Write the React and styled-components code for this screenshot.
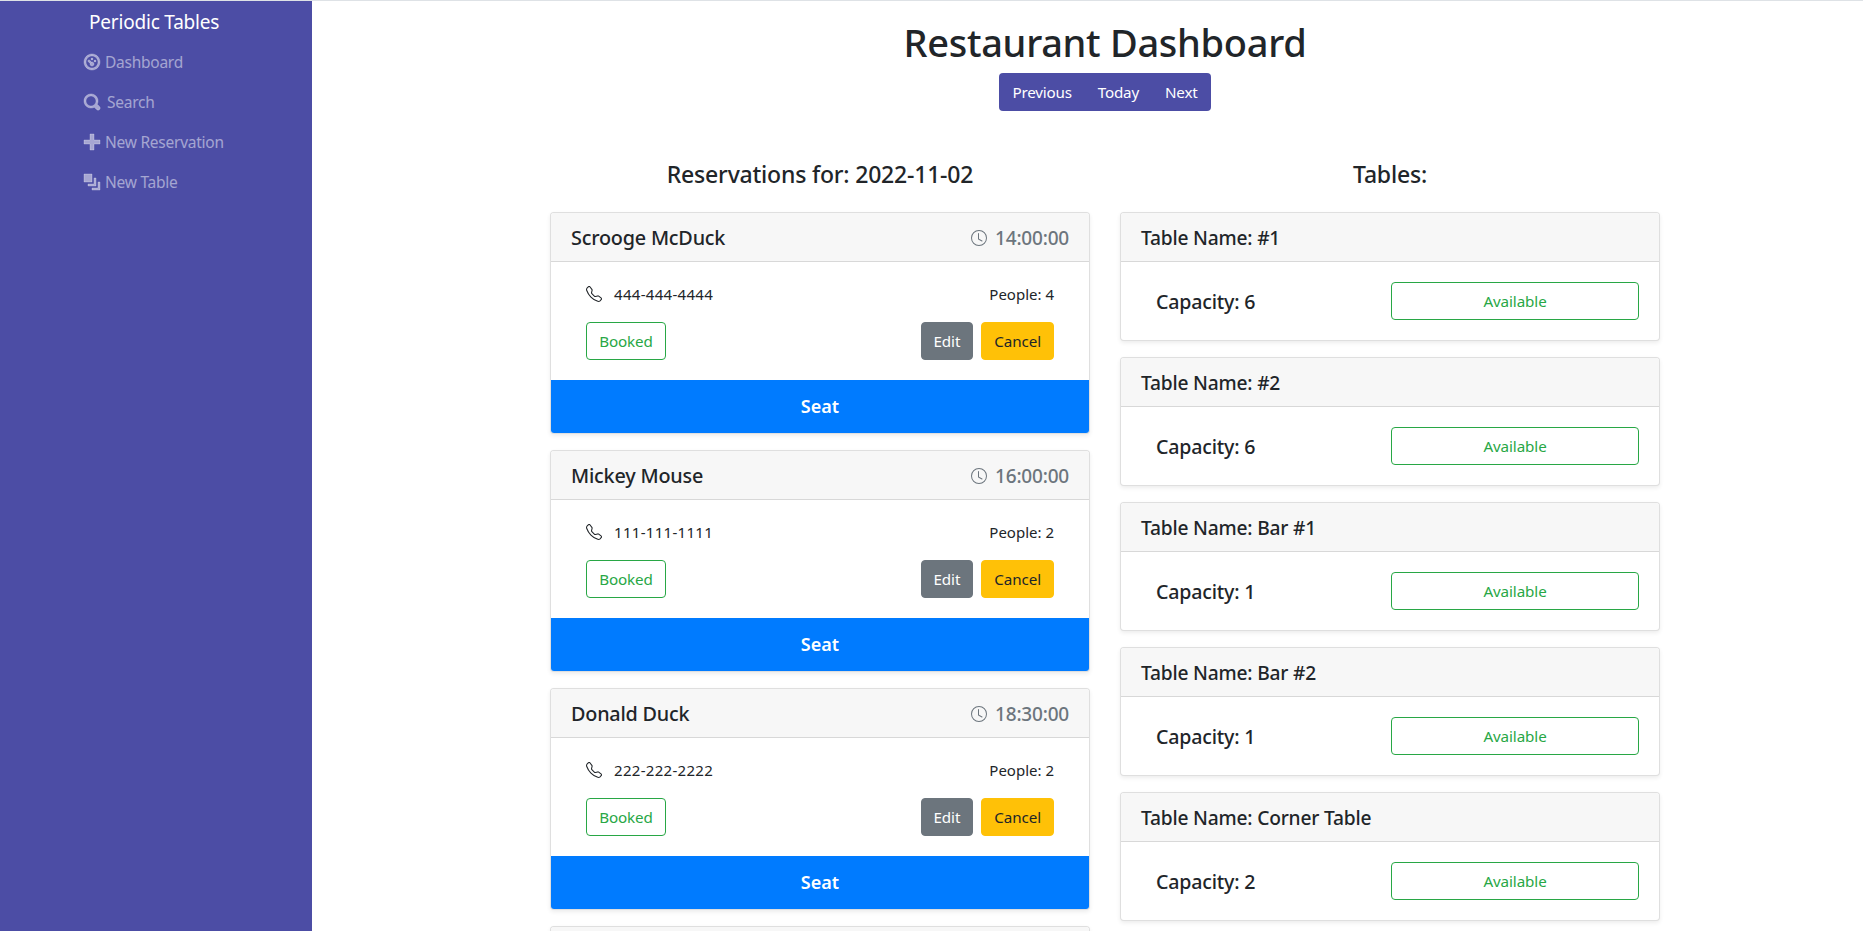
import React from "react";
import styled, { createGlobalStyle } from "styled-components";

//icons
import { BsClock, BsTelephone } from "react-icons/bs";

const GlobalStyle = createGlobalStyle`
  html, body {
    margin: 0;
    padding: 0;
    height: 100%;
    overflow: hidden;
    background: #fff;
  }
  body {
    font-family: "Noto Sans", "Open Sans", Arial, sans-serif;
    font-size: 16px;
    color: #212529;
  }
  * {
    box-sizing: border-box;
  }
`;

const Page = styled.div`
  display: flex;
  height: 100vh;
  border-top: 1px solid #dee2e6;
  overflow: hidden;
`;

const Sidebar = styled.nav`
  flex: 0 0 312px;
  background: #4c4da5;
  display: flex;
  flex-direction: column;
  padding: 9px 0 0 84px;
`;

const Brand = styled.div`
  color: #fff;
  font-size: 19px;
  line-height: 24px;
  margin: 0 0 8px 5px;
  letter-spacing: -0.2px;
`;

const NavItem = styled.a`
  display: flex;
  align-items: center;
  height: 40px;
  color: rgba(255, 255, 255, 0.5);
  font-size: 15.5px;
  letter-spacing: -0.25px;
  gap: ${(p) => p.$gap || 5}px;
`;

const NavIcon = styled.svg`
  width: 16px;
  height: 16px;
  fill: currentColor;
  stroke: currentColor;
  stroke-width: 0.25;
  overflow: visible;
  flex: none;
`;

const Main = styled.main`
  flex: 1;
  padding-left: 238px;
  overflow: hidden;
`;

const Content = styled.div`
  width: 1110px;
`;

const Title = styled.h1`
  margin: 17px 0 0;
  font-size: 38px;
  line-height: 48px;
  font-weight: 500;
  text-align: center;
  letter-spacing: -0.3px;
`;

const DateGroup = styled.div`
  display: flex;
  justify-content: center;
  margin-top: 7px;
`;

const DateButtons = styled.div`
  display: flex;
  background: #4c4da5;
  border-radius: 4px;
`;

const DateButton = styled.button`
  height: 38px;
  padding: 0 13px;
  border: none;
  background: transparent;
  color: #fff;
  font: inherit;
  font-size: 15.2px;
  letter-spacing: -0.2px;
`;

const Columns = styled.div`
  display: grid;
  grid-template-columns: 540px 540px;
  column-gap: 30px;
  margin-top: 44px;
`;

const ColumnTitle = styled.h4`
  margin: 0 0 19px;
  height: 38px;
  line-height: 38px;
  font-size: 23px;
  font-weight: 500;
  text-align: center;
  letter-spacing: -0.2px;
`;

const Card = styled.div`
  background: #fff;
  border: 1px solid rgba(0, 0, 0, 0.125);
  border-radius: 4px;
  box-shadow: 0 2px 4px rgba(0, 0, 0, 0.075);
  margin-bottom: 16px;
  overflow: hidden;
`;

const CardHeader = styled.div`
  display: flex;
  justify-content: space-between;
  align-items: center;
  height: 49px;
  padding: 1px 20px 0;
  background: #f7f7f7;
  border-bottom: 1px solid rgba(0, 0, 0, 0.125);
  font-size: ${(p) => p.$size || 19}px;
  font-weight: 500;
  letter-spacing: -0.2px;
`;

const TimeText = styled.span`
  display: flex;
  align-items: center;
  gap: 8px;
  color: #6c757d;
  font-size: 19px;

  svg {
    width: 16px;
    height: 16px;
  }
`;

const ReservationBody = styled.div`
  padding: 21px 35px 0;
  height: 118px;
`;

const Row = styled.div`
  display: flex;
  justify-content: space-between;
  align-items: center;
`;

const InfoRow = styled(Row)`
  height: 22px;
  margin-bottom: 17px;
  font-size: 15px;
`;

const Phone = styled.span`
  display: flex;
  align-items: center;
  gap: 12px;
  letter-spacing: 0.3px;

  svg {
    width: 16px;
    height: 16px;
  }
`;

const ButtonGroup = styled.div`
  display: flex;
  gap: 8px;
`;

const Button = styled.button`
  height: 38px;
  padding: 0 12px;
  border: 1px solid ${(p) => p.$bg};
  border-radius: 4px;
  background: ${(p) => p.$bg};
  color: ${(p) => p.$color};
  font: inherit;
  font-size: 15.2px;
  letter-spacing: -0.1px;
`;

const StatusBadge = styled.div`
  display: flex;
  align-items: center;
  justify-content: center;
  width: ${(p) => p.$width}px;
  height: 38px;
  border: 1px solid #28a745;
  border-radius: 4px;
  color: #28a745;
  font-size: 15.2px;
  letter-spacing: -0.1px;
`;

const SeatButton = styled.button`
  display: block;
  width: 100%;
  height: 53px;
  padding: 0 0 2px;
  border: none;
  background: #007bff;
  color: #fff;
  font: inherit;
  font-size: 18px;
  font-weight: 600;
`;

const TableBody = styled.div`
  display: flex;
  justify-content: space-between;
  align-items: center;
  height: 78px;
  padding: 0 20px 0 35px;
`;

const Capacity = styled.span`
  font-size: 19.6px;
  font-weight: 500;
  letter-spacing: -0.2px;
`;

const iconPaths = {
  dashboard:
    "M4 0c-2.2 0-4 1.8-4 4s1.8 4 4 4 4-1.8 4-4-1.8-4-4-4zm0 1c1.66 0 3 1.34 3 3s-1.34 3-3 3-3-1.34-3-3 1.34-3 3-3zm0 1c-.28 0-.5.22-.5.5s.22.5.5.5.5-.22.5-.5-.22-.5-.5-.5zm-1.66 1a.5.5 0 0 0-.19.84l.91.91c-.02.08-.06.16-.06.25 0 .55.45 1 1 1s1-.45 1-1-.45-1-1-1c-.09 0-.17.04-.25.06l-.91-.91a.5.5 0 0 0-.44-.16.5.5 0 0 0-.06 0zm3.16 0c-.28 0-.5.22-.5.5s.22.5.5.5.5-.22.5-.5-.22-.5-.5-.5z",
  search:
    "M3.5 0c-1.93 0-3.5 1.57-3.5 3.5s1.57 3.5 3.5 3.5c.59 0 1.17-.14 1.66-.41a1 1 0 0 0 .13.13l1 1a1.02 1.02 0 1 0 1.44-1.44l-1-1a1 1 0 0 0-.16-.13c.27-.49.44-1.06.44-1.66 0-1.93-1.57-3.5-3.5-3.5zm0 1c1.39 0 2.5 1.11 2.5 2.5 0 .66-.24 1.27-.66 1.72-.01.01-.02.02-.03.03a1 1 0 0 0-.13.13c-.44.4-1.04.63-1.69.63-1.39 0-2.5-1.11-2.5-2.5s1.11-2.5 2.5-2.5z",
  plus: "M3 0v3h-3v2h3v3h2v-3h3v-2h-3v-3h-2z",
  layers: "M0 0v4h4v-4h-4zm5 2v3h-3v1h4v-4h-1zm2 2v3h-3v1h4v-4h-1z",
};

const navLinks = [
  { label: "Dashboard", icon: "dashboard" },
  { label: "Search", icon: "search", gap: 7 },
  { label: "New Reservation", icon: "plus" },
  { label: "New Table", icon: "layers" },
];

const reservations = [
  { name: "Scrooge McDuck", time: "14:00:00", phone: "444-444-4444", people: 4 },
  { name: "Mickey Mouse", time: "16:00:00", phone: "111-111-1111", people: 2 },
  { name: "Donald Duck", time: "18:30:00", phone: "222-222-2222", people: 2 },
];

const tables = [
  { name: "#1", capacity: 6 },
  { name: "#2", capacity: 6 },
  { name: "Bar #1", capacity: 1 },
  { name: "Bar #2", capacity: 1 },
  { name: "Corner Table", capacity: 2 },
];

export default function App() {
  return (
    <>
      <GlobalStyle />
      <Page>
        <Sidebar>
          <Brand>Periodic Tables</Brand>
          {navLinks.map((link) => (
            <NavItem key={link.label} $gap={link.gap}>
              <NavIcon viewBox="0 0 8 8">
                <path d={iconPaths[link.icon]} />
              </NavIcon>
              {link.label}
            </NavItem>
          ))}
        </Sidebar>
        <Main>
          <Content>
            <Title>Restaurant Dashboard</Title>
            <DateGroup>
              <DateButtons>
                <DateButton>Previous</DateButton>
                <DateButton>Today</DateButton>
                <DateButton>Next</DateButton>
              </DateButtons>
            </DateGroup>
            <Columns>
              <div>
                <ColumnTitle>Reservations for: 2022-11-02</ColumnTitle>
                {reservations.map((r) => (
                  <Card key={r.name}>
                    <CardHeader $size={19.8}>
                      <span>{r.name}</span>
                      <TimeText>
                        <BsClock />
                        {r.time}
                      </TimeText>
                    </CardHeader>
                    <ReservationBody>
                      <InfoRow>
                        <Phone>
                          <BsTelephone />
                          {r.phone}
                        </Phone>
                        <span>People: {r.people}</span>
                      </InfoRow>
                      <Row>
                        <StatusBadge $width={80}>Booked</StatusBadge>
                        <ButtonGroup>
                          <Button $bg="#6c757d" $color="#fff">
                            Edit
                          </Button>
                          <Button $bg="#ffc107" $color="#212529">
                            Cancel
                          </Button>
                        </ButtonGroup>
                      </Row>
                    </ReservationBody>
                    <SeatButton>Seat</SeatButton>
                  </Card>
                ))}
                <Card>
                  <CardHeader />
                </Card>
              </div>
              <div>
                <ColumnTitle>Tables:</ColumnTitle>
                {tables.map((t) => (
                  <Card key={t.name}>
                    <CardHeader $size={19.2}>Table Name: {t.name}</CardHeader>
                    <TableBody>
                      <Capacity>Capacity: {t.capacity}</Capacity>
                      <StatusBadge $width={248}>Available</StatusBadge>
                    </TableBody>
                  </Card>
                ))}
              </div>
            </Columns>
          </Content>
        </Main>
      </Page>
    </>
  );
}
